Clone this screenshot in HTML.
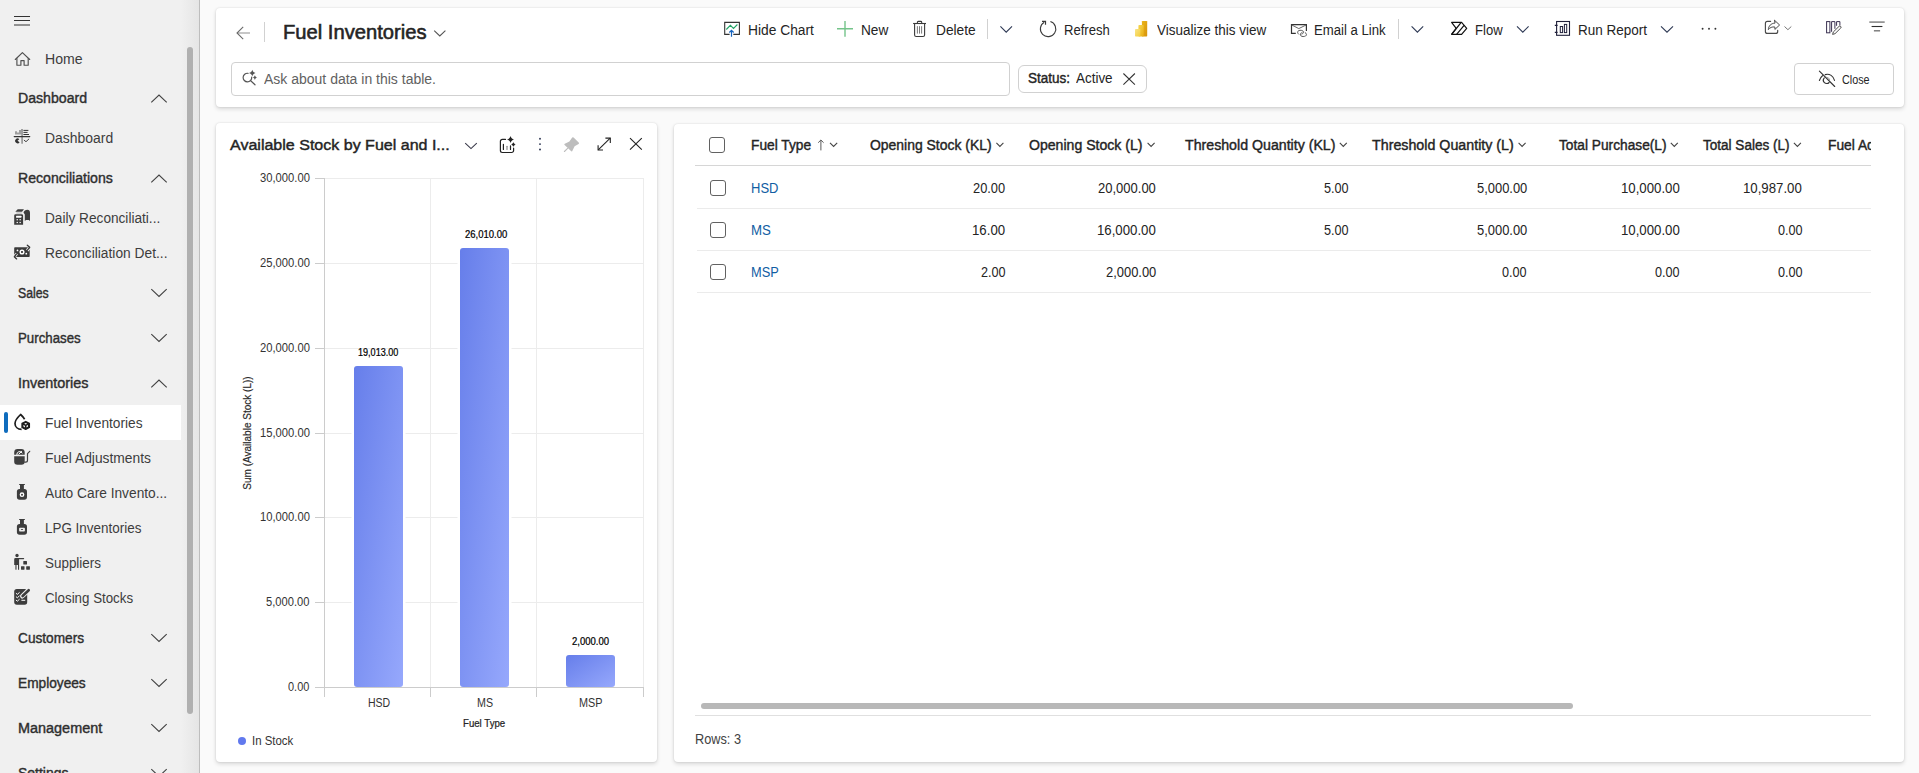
<!DOCTYPE html>
<html lang="en"><head><meta charset="utf-8"><title>Fuel Inventories</title>
<style>
html,body{margin:0;padding:0}
body{width:1919px;height:773px;overflow:hidden;position:relative;background:#fafafa;font-family:"Liberation Sans",sans-serif;}
.t{position:absolute;line-height:20px;white-space:pre;transform-origin:0 50%;}
.abs,svg.i{position:absolute}
svg.i{overflow:visible}
#sb{position:absolute;left:0;top:0;width:199px;height:773px;background:linear-gradient(90deg,#f0f0f0 0,#f0f0f0 181px,#e5e5e5 199px);border-right:1px solid #bdbdbd;}
#sel{position:absolute;left:0;top:405px;width:181px;height:35px;background:#fff}
#selbar{position:absolute;left:4px;top:412px;width:4px;height:21px;background:#0f6cbd;border-radius:2px}
#sbthumb{position:absolute;left:187px;top:47px;width:6px;height:667px;background:#b0b0b0;border-radius:3px}
.card{position:absolute;background:#fff;border-radius:4px;box-shadow:0 0 2px rgba(0,0,0,.12),0 2px 4px rgba(0,0,0,.14)}
.box{position:absolute;box-sizing:border-box;border:1px solid #d1d1d1;background:#fff}
.vl{position:absolute;width:1px;background:#d1d1d1}
.hl{position:absolute;height:1px}
.cb{position:absolute;box-sizing:border-box;width:16px;height:16px;border:1px solid #616161;border-radius:3px;background:#fff}
.bar{position:absolute;border-radius:3px;box-shadow:0 0 0 2.5px #fff;background:linear-gradient(to bottom right,#667eea 0%,#96a8fc 100%)}

</style></head>
<body>
<div id="sb"></div>
<div id="sel"></div><div id="selbar"></div><div id="sbthumb"></div>

<!-- cards -->
<div class="card" style="left:216px;top:8px;width:1688px;height:99px"></div>
<div class="card" style="left:216px;top:123px;width:441px;height:639px"></div>
<div class="card" style="left:674px;top:124px;width:1230px;height:638px"></div>

<!-- header boxes -->
<div class="vl" style="left:264px;top:22px;height:20px"></div>
<div class="box" style="left:231px;top:62px;width:779px;height:34px;border-radius:4px"></div>
<div class="box" style="left:1018px;top:65px;width:129px;height:28px;border-radius:6px"></div>
<div class="box" style="left:1794px;top:63px;width:100px;height:32px;border-radius:4px"></div>
<div class="vl" style="left:987px;top:19px;height:20px"></div>
<div class="vl" style="left:1398px;top:19px;height:20px"></div>

<!-- chart plot -->
<div id="plot">
<div class="hl" style="left:324px;top:178px;width:320px;background:#ececec"></div>
<div class="hl" style="left:324px;top:263px;width:320px;background:#ececec"></div>
<div class="hl" style="left:324px;top:348px;width:320px;background:#ececec"></div>
<div class="hl" style="left:324px;top:433px;width:320px;background:#ececec"></div>
<div class="hl" style="left:324px;top:517px;width:320px;background:#ececec"></div>
<div class="hl" style="left:324px;top:602px;width:320px;background:#ececec"></div>
<div class="vl" style="left:430px;top:178px;height:509px;background:#ececec"></div>
<div class="vl" style="left:536px;top:178px;height:509px;background:#ececec"></div>
<div class="vl" style="left:643px;top:178px;height:509px;background:#ececec"></div>
<!-- y ticks -->
<div class="hl" style="left:315px;top:178px;width:9px;background:#ccc"></div>
<div class="hl" style="left:315px;top:263px;width:9px;background:#ccc"></div>
<div class="hl" style="left:315px;top:348px;width:9px;background:#ccc"></div>
<div class="hl" style="left:315px;top:433px;width:9px;background:#ccc"></div>
<div class="hl" style="left:315px;top:517px;width:9px;background:#ccc"></div>
<div class="hl" style="left:315px;top:602px;width:9px;background:#ccc"></div>
<!-- bars -->
<div class="bar" style="left:354px;top:366px;width:49px;height:321px"></div>
<div class="bar" style="left:460px;top:248px;width:49px;height:439px"></div>
<div class="bar" style="left:566px;top:655px;width:49px;height:32px"></div>
<!-- axes -->
<div class="vl" style="left:324px;top:178px;height:519px;background:#ccc"></div>
<div class="hl" style="left:315px;top:687px;width:329px;background:#ccc"></div>
<div class="vl" style="left:430px;top:687px;height:10px;background:#ccc"></div>
<div class="vl" style="left:536px;top:687px;height:10px;background:#ccc"></div>
<div class="vl" style="left:643px;top:687px;height:10px;background:#ccc"></div>
<!-- legend -->
<div class="abs" style="left:238px;top:737px;width:8px;height:8px;border-radius:4px;background:#6179ee"></div>
</div>
<div class="abs" style="left:147.5px;top:422.6px;width:200px;height:20px;line-height:20px;text-align:center;font-size:10px;-webkit-text-stroke:.18px currentColor;color:#2a2a2a;transform:rotate(-90deg);transform-origin:50% 50%;white-space:pre;letter-spacing:0.01px">Sum (Available Stock (L))</div>

<!-- grid -->
<div class="cb" style="left:709px;top:137px"></div>
<div class="cb" style="left:710px;top:180px"></div>
<div class="cb" style="left:710px;top:222px"></div>
<div class="cb" style="left:710px;top:264px"></div>
<div class="hl" style="left:695px;top:165px;width:1176px;background:#d6d6d6"></div>
<div class="hl" style="left:697px;top:208px;width:1174px;background:#ebebeb"></div>
<div class="hl" style="left:697px;top:250px;width:1174px;background:#ebebeb"></div>
<div class="hl" style="left:697px;top:292px;width:1174px;background:#ebebeb"></div>
<div class="abs" style="left:701px;top:703px;width:872px;height:6px;border-radius:3px;background:#b8b8b8"></div>
<div class="hl" style="left:695px;top:715px;width:1176px;background:#e0e0e0"></div>
<!-- clipped "Fuel Ac" header -->
<div class="abs" style="left:1828.4px;top:134.95px;width:42.4px;height:20px;overflow:hidden"><div class="t" style="left:0;top:0;font-size:14px;-webkit-text-stroke:.39px currentColor;color:#242424;transform:scaleX(.985)">Fuel Adjustment</div></div>
<svg class="i" style="left:0;top:0" width="1919" height="773" viewBox="0 0 1919 773" fill="none" stroke-linecap="round" stroke-linejoin="round">
<!-- ===== sidebar ===== -->
<g stroke="#333" stroke-width="1.1" stroke-linecap="butt">
  <path d="M14 16.5H30M14 20.5H30M14 25H30"/>
</g>
<!-- home -->
<g stroke="#4f4f4f" stroke-width="1.15">
  <path d="M15.3 59.5L22.4 52.7L29.7 59.5"/>
  <path d="M16.9 58.6V65.2H20.9V60.6H24.1V65.2H28.2V58.6"/>
</g>
<!-- dashboard icon -->
<g>
  <path d="M15 134.6V131.2H17V132.4H19V130H21V129H23V143.8H21.2V134.6Z" fill="#9e9e9e" stroke="none"/>
  <path d="M23.8 130.4H28M23.8 132.4H27.2M23.8 134.5H28.6" stroke="#333" stroke-width="1"/>
  <path d="M14.2 136.6H29.8" stroke="#333" stroke-width="1.1"/>
  <path d="M19.3 139.2A2.4 2.4 0 1 0 19.6 142.2L17.5 140.8Z" fill="#333" stroke="none"/>
  <path d="M24.2 140.3L26 141.7L28.8 139.1" stroke="#444" stroke-width="1"/>
</g>
<!-- daily reconciliation: calculator + paper + bookmark -->
<g fill="#3d3d3d" stroke="none">
  <path d="M15.3 211.7L17.7 209.2H24L22 211.7Z"/>
  <rect x="16.3" y="212.2" width="5.4" height="1.6" fill="#c9c9c9"/>
  <path d="M14.2 215.6a1.4 1.4 0 0 1 1.4-1.4h6.1a1.4 1.4 0 0 1 1.4 1.4V224.8H14.2Z"/>
  <rect x="16" y="215.8" width="5.4" height="1.9" rx=".4" fill="#fff"/>
  <rect x="16.6" y="219.1" width="1.3" height="1.2" fill="#fff"/><rect x="19.4" y="219.1" width="1.6" height="1.2" fill="#d8d8d8"/>
  <rect x="16.6" y="221.9" width="1.3" height="1.2" fill="#fff"/><rect x="19.4" y="221.9" width="1.6" height="1.2" fill="#d8d8d8"/>
  <path d="M24.8 221V214.6L23.5 212.5C23.8 210.8 25.6 209.7 27.4 209.7C29 209.7 30 211 30 212.7V221l-1.2-.9h-2.8Z"/>
</g>
<!-- reconciliation details: banknote with arrows -->
<g stroke="none">
  <rect x="14.2" y="247.2" width="15.5" height="9.8" rx=".8" fill="#3a3a3a"/>
  <circle cx="22" cy="252" r="2.55" fill="#fff"/><circle cx="22" cy="252" r="1.05" fill="#2a2a2a"/>
  <circle cx="17.5" cy="250.4" r=".9" fill="#fff"/><circle cx="26.3" cy="253.7" r=".9" fill="#fff"/>
  <path d="M29.2 248L27.2 250.5" stroke="#f4f4f4" stroke-width="2.9" fill="none" stroke-linecap="butt"/>
  <path d="M14.8 256.1L16.8 253.6" stroke="#f4f4f4" stroke-width="2.9" fill="none" stroke-linecap="butt"/>
  <path d="M27.3 245.2L29.7 247.3L27.4 250.2" stroke="#333" stroke-width="1.3" fill="none"/>
  <path d="M16.6 258.9L14.3 256.8L16.4 254" stroke="#333" stroke-width="1.3" fill="none"/>
</g>
<!-- fuel inventories: drop + cube -->
<g stroke="#1c1c1c" stroke-width="1.7" stroke-linecap="butt">
  <path d="M24.6 419.2C23.4 417.2 21.8 415.6 20.6 414.5C18.2 416.8 15 420 15 423.4C15 426.9 17.8 429.3 21.6 429.4"/>
  <path d="M25.7 421.6L29.3 423.5V427.4L25.7 429.3L22.1 427.4V423.5Z" stroke-width="1.5" fill="#1c1c1c"/>
</g>
<path d="M25.7 423L27.2 423.8L25.7 424.6L24.2 423.8Z M23.4 425L24.9 425.8V427.4L23.4 426.6Z M28 425L26.5 425.8V427.4L28 426.6Z" fill="#fff"/>
<!-- fuel adjustments: pump -->
<g stroke="none" fill="#3f3f3f">
  <path d="M14.2 454.8V452.4a3.4 3.4 0 0 1 3.4-3.4h3.7a3.4 3.4 0 0 1 3.4 3.4V454.8Z"/>
  <path d="M14.2 456.2H24.7V461.4a3.3 3.3 0 0 1-3.3 3.3H17.5a3.3 3.3 0 0 1-3.3-3.3Z"/>
  <path d="M16.8 454.6a2.9 2.9 0 0 1 5.4-1.6" stroke="#fff" stroke-width="1" fill="none"/>
  <path d="M18.8 454.2L21.6 451.4" stroke="#fff" stroke-width="1" fill="none"/>
  <path d="M24.7 462.1h.9a1.9 1.9 0 0 0 1.9-1.9V453.6L29.7 451.3" stroke="#3f3f3f" stroke-width="1.2" fill="none"/>
</g>
<!-- auto care: bottle -->
<g stroke="none" fill="#3d3d3d">
  <rect x="19.1" y="484" width="5.8" height="1.1" rx=".3"/>
  <rect x="20" y="484.5" width="3.9" height="5"/>
  <rect x="16.9" y="489" width="10.1" height="10.7" rx="2.6"/>
  <circle cx="22" cy="494.7" r="2.35" fill="#fff"/><circle cx="22" cy="494.7" r="1" fill="#3d3d3d"/>
</g>
<!-- LPG: bottle -->
<g stroke="none" fill="#3d3d3d">
  <rect x="19.1" y="519" width="5.8" height="1.1" rx=".3"/>
  <rect x="20" y="519.5" width="3.9" height="5"/>
  <rect x="16.9" y="524" width="10.1" height="10.7" rx="2.6"/>
  <rect x="19.1" y="527.7" width="5.8" height="3.7" rx=".9" fill="#eee"/><ellipse cx="22" cy="529.5" rx="1.2" ry=".5" fill="#3d3d3d"/>
</g>
<!-- suppliers -->
<g stroke="none" fill="#3d3d3d">
  <circle cx="17" cy="555.5" r="1.65"/>
  <path d="M14.2 559.2a1.2 1.2 0 0 1 1.2-1.2H23.6a.6.6 0 0 1 0 1.2H19.1V569.7H18V565H14.2Z"/>
  <rect x="15.2" y="565" width="1.5" height="4.7" fill="#6a6a6a"/>
  <rect x="23.3" y="561" width="3.7" height="3.5" rx=".5"/>
  <rect x="21" y="566.2" width="3.5" height="3.5" rx=".4"/>
  <rect x="26.2" y="566.2" width="3.7" height="3.5" rx=".4"/>
</g>
<!-- closing stocks -->
<g stroke="none">
  <rect x="14.2" y="589" width="13" height="15.7" rx="2.6" fill="#3d3d3d"/>
  <g stroke="#fff" stroke-width="1" fill="none">
    <path d="M16.2 593.4L17.3 594.4L19.3 592.6"/>
    <path d="M16.2 596.8L17.3 597.8L19.3 596"/>
    <path d="M16.2 600.2L17.3 601.2L19.3 599.4"/>
    <path d="M21.8 600.3H24.8"/>
  </g>
  <path d="M22.3 596.2L28.8 590" stroke="#f0f0f0" stroke-width="4.6" fill="none"/>
  <path d="M22.6 596L28.7 590.2" stroke="#3d3d3d" stroke-width="2.6" fill="none"/>
</g>
<!-- sidebar chevrons -->
<g stroke="#424242" stroke-width="1.1" stroke-linecap="butt" stroke-linejoin="miter">
  <path d="M151.3 102.4L159 95L166.7 102.4"/>
  <path d="M151.3 182.4L159 175L166.7 182.4"/>
  <path d="M151.3 289.1L159 296.5L166.7 289.1"/>
  <path d="M151.3 334.1L159 341.5L166.7 334.1"/>
  <path d="M151.3 387.4L159 380L166.7 387.4"/>
  <path d="M151.3 634.1L159 641.5L166.7 634.1"/>
  <path d="M151.3 679.1L159 686.5L166.7 679.1"/>
  <path d="M151.3 724.1L159 731.5L166.7 724.1"/>
  <path d="M151.3 769.1L159 776.5L166.7 769.1"/>
</g>

<!-- ===== header ===== -->
<g stroke="#6a6a6a" stroke-width="1.1" stroke-linecap="butt" stroke-linejoin="miter">
  <path d="M237 33H250" stroke="#9a9a9a"/><path d="M243.2 26.9L237 33L243.2 39.1"/>
  <path d="M434.2 30.6L439.8 36L445.4 30.6" stroke="#555"/>
</g>
<!-- hide chart -->
<g stroke-width="1.1" stroke-linecap="butt" stroke-linejoin="miter">
  <path d="M729.6 34.4H724.7V22.4H739.4V34.4H733.3" stroke="#333"/>
  <path d="M726.3 29.5L730.4 25.3L733.5 28.4L737.4 24.5" stroke="#21a366"/>
  <path d="M731.5 36.7V30.4M729.3 32.5L731.5 30.3L733.7 32.5" stroke="#1664c0" stroke-width="1.2"/>
</g>
<!-- plus -->
<path d="M837 28.8H853M845 21V36.7" stroke="#74c48a" stroke-width="1.4" stroke-linecap="butt"/>
<!-- trash -->
<g stroke="#3a3a3a" stroke-width="1.1" stroke-linecap="butt">
  <path d="M913.1 23.5H926"/>
  <path d="M917.4 23.4V22.3a.9.9 0 0 1 .9-.9h2.5a.9.9 0 0 1 .9.9V23.4"/>
  <path d="M914.6 23.5V34.9a1.6 1.6 0 0 0 1.6 1.6h6.8a1.6 1.6 0 0 0 1.6-1.6V23.5"/>
  <path d="M917.4 26.2V33.6M919.5 26.2V33.6M921.6 26.2V33.6" stroke="#6b6b6b" stroke-width=".9"/>
</g>
<!-- header dividers' chevrons -->
<g stroke="#2f3a55" stroke-width="1.1" stroke-linecap="butt" stroke-linejoin="miter">
  <path d="M1000.4 26.3L1006.2 32.2L1012 26.3"/>
  <path d="M1411.6 26.3L1417.4 32.2L1423.2 26.3"/>
  <path d="M1517 26.3L1522.8 32.2L1528.6 26.3"/>
  <path d="M1661 26.3L1667 32.2L1673 26.3"/>
</g>
<!-- refresh -->
<g stroke="#3a3a3a" stroke-width="1.1" stroke-linecap="butt" stroke-linejoin="miter">
  <path d="M1050.4 21.6A7.7 7.7 0 1 1 1044.2 22.3"/>
  <path d="M1042 21.4H1045.5V24.8" stroke-width="1.2"/>
</g>
<!-- power bi -->
<defs>
  <linearGradient id="pb1" x1="0" y1="0" x2="1" y2="1"><stop offset="0" stop-color="#ebb51a"/><stop offset="1" stop-color="#d6930b"/></linearGradient>
  <linearGradient id="pb2" x1="0" y1="0" x2="1" y2="1"><stop offset="0" stop-color="#f6d751"/><stop offset="1" stop-color="#e9ad12"/></linearGradient>
  <linearGradient id="pb3" x1="0" y1="0" x2="1" y2="1"><stop offset="0" stop-color="#f9e589"/><stop offset="1" stop-color="#f4cd3c"/></linearGradient>
</defs>
<rect x="1141.9" y="20.9" width="5.3" height="15.6" rx=".7" fill="url(#pb1)"/>
<rect x="1138.4" y="25.1" width="5.3" height="11.4" rx=".7" fill="url(#pb2)"/>
<rect x="1135" y="28.9" width="5.3" height="7.6" rx=".7" fill="url(#pb3)"/>
<!-- email a link -->
<g stroke="#333" stroke-width="1.1" stroke-linecap="butt" stroke-linejoin="miter">
  <path d="M1295.8 33.4H1291.5V24.6H1306.4V31.1" stroke-width="1.2"/>
  <path d="M1291.6 24.9L1298.8 28.6L1306.3 24.9" stroke="#555" stroke-width=".9"/>
  <g stroke="#5a5a5a" stroke-width="1" stroke-linecap="round">
    <path d="M1298.6 34.2C1297.2 33 1297.2 31.3 1298.8 30.6C1300.3 30 1302.2 30.2 1303.2 31.2C1304 32.2 1303 33.6 1302 34.2"/>
    <path d="M1305.2 32.6C1306.8 33.4 1306.9 35.2 1305.6 36C1304.2 36.7 1302 36.8 1300.9 35.8C1299.8 34.6 1300.6 33 1302 32.4"/>
  </g>
</g>
<!-- flow -->
<g stroke="#111" stroke-width="1.2" stroke-linejoin="round">
  <path d="M1451.6 22.4H1461.6L1466.7 28.3L1461.6 34.3H1451.6L1456.2 28.3Z"/>
  <path d="M1461 22.7L1451.9 34M1463.9 25.6L1456.6 34.3"/>
</g>
<!-- run report -->
<g stroke="#20203a" stroke-width="1.1" stroke-linecap="butt" stroke-linejoin="miter">
  <rect x="1556.6" y="21.5" width="12.9" height="13.8"/>
  <path d="M1554.8 25.4H1557.6M1554.8 32.4H1557.6"/>
  <rect x="1560.3" y="26.5" width="2.3" height="6.1" stroke-width="1"/>
  <rect x="1564.4" y="24.4" width="2.3" height="8.2" stroke-width="1"/>
</g>
<!-- more ... -->
<g fill="#333" stroke="none"><circle cx="1702.6" cy="28.8" r=".95"/><circle cx="1709" cy="28.8" r=".95"/><circle cx="1715.4" cy="28.8" r=".95"/></g>
<!-- share -->
<g stroke="#4a4a4a" stroke-width="1.15" stroke-linecap="round" stroke-linejoin="round">
  <path d="M1770.6 21.4H1767.4a2 2 0 0 0-2 2V31.4a2 2 0 0 0 2 2H1775.7a2 2 0 0 0 2-2V30.3"/>
  <path d="M1774.7 20.4L1779.6 25L1774.9 29.4V27C1772 26.6 1770 27.6 1768.3 29.6C1768.6 26 1770.8 23.4 1774.7 23.1Z" stroke-width="1"/>
  <path d="M1784.5 26.5L1787.9 29.7L1791.3 26.5" stroke="#777" stroke-width="1" stroke-linecap="butt"/>
</g>
<!-- edit columns -->
<g stroke="#3a3050" stroke-width="1" stroke-linecap="butt" stroke-linejoin="miter">
  <rect x="1826.6" y="21.6" width="3.3" height="11.2"/>
  <path d="M1834.9 28.8V21.6H1831.6V31.8"/>
  <path d="M1836.6 25.8V21.6H1839.9V25.4"/>
  <path d="M1832.6 34.4L1833.3 32L1839 26.4a1.1 1.1 0 0 1 1.7 1.7L1835 33.7Z" stroke="#3a3a3a" stroke-width=".9" fill="#fff"/>
</g>
<!-- filter -->
<g stroke-linecap="butt">
  <path d="M1869.3 22.1H1884.7" stroke="#8a8a8a" stroke-width="1.6"/>
  <path d="M1871.6 26.5H1882.4" stroke="#2f2f2f" stroke-width="1.1"/>
  <path d="M1873.9 30.8H1880.1" stroke="#777" stroke-width="1.4"/>
</g>
<!-- search sparkle -->
<g stroke="#555" stroke-width="1.2" stroke-linecap="round">
  <path d="M248 73.3A4.3 4.3 0 1 0 251.7 77.2"/>
  <path d="M250.7 80.8L255 84.8"/>
</g>
<g fill="#555" stroke="none">
  <path d="M252.3 69.8C252.85 71.62 253.78 72.55 255.60000000000002 73.1C253.78 73.65 252.85 74.58 252.3 76.39999999999999C251.75 74.58 250.82 73.65 249.0 73.1C250.82 72.55 251.75 71.62 252.3 69.8Z"/>
  <path d="M254.9 75.3C255.29 76.57 255.93 77.21 257.2 77.6C255.93 77.99 255.29 78.63 254.9 79.89999999999999C254.51 78.63 253.87 77.99 252.6 77.6C253.87 77.21 254.51 76.57 254.9 75.3Z"/>
</g>
<!-- chip x -->
<path d="M1123.4 73.5L1134.9 84.7M1134.9 73.5L1123.4 84.7" stroke="#333" stroke-width="1.05" stroke-linecap="butt"/>
<!-- eye off -->
<g stroke="#333" stroke-width="1.1" stroke-linecap="round">
  <path d="M1819.4 71.2L1834.7 86.5"/>
  <path d="M1825.2 74.6C1829.6 73.4 1833.4 76 1834.5 80.4"/>
  <path d="M1822.5 75.7C1820.8 77 1819.9 78.6 1819.4 80.5"/>
  <path d="M1824.3 77.9A3.3 3.3 0 0 0 1829.1 82.5" />
  <path d="M1826.8 77.2A3.3 3.3 0 0 1 1829.7 79.6" stroke="#888" stroke-width=".8"/>
</g>

<!-- ===== chart header icons ===== -->
<g stroke="#3a3a4a" stroke-width="1.1" stroke-linecap="butt" stroke-linejoin="miter">
  <path d="M465.2 143.1L471 148.6L476.8 143.1"/>
</g>
<g stroke="#222" stroke-width="1.2" stroke-linecap="round" stroke-linejoin="round">
  <path d="M505.5 139.4H502.3a1.9 1.9 0 0 0-1.9 1.9V150.6a1.9 1.9 0 0 0 1.9 1.9H511.7a1.9 1.9 0 0 0 1.9-1.9V148.2"/>
  <path d="M503.4 144.3V149.5M510.5 145.8V149.5"/>
  <path d="M507 146.3V149.5" stroke="#888"/>
</g>
<g fill="#222" stroke="none">
  <path d="M510.5 135.9C511.09 137.83 512.07 138.81 514.0 139.4C512.07 139.99 511.09 140.97 510.5 142.9C509.91 140.97 508.93 139.99 507.0 139.4C508.93 138.81 509.91 137.83 510.5 135.9Z"/>
  <path d="M513.4 141.9C513.82 143.28 514.52 143.98 515.9 144.4C514.52 144.82 513.82 145.52 513.4 146.9C512.98 145.52 512.28 144.82 510.9 144.4C512.28 143.98 512.98 143.28 513.4 141.9Z"/>
</g>
<g fill="#2a3350" stroke="none"><circle cx="540" cy="138.8" r=".95"/><circle cx="540" cy="144.1" r=".95"/><circle cx="540" cy="149.5" r=".95"/></g>
<!-- pin -->
<g fill="#bdbdbd" stroke="none">
  <path d="M572.2 137.5a1 1 0 0 1 1.4 0L578.7 142.4a1 1 0 0 1-.1 1.5L574.6 146.2L572.3 150.9a.8.8 0 0 1-1.3.2L564.6 145a.8.8 0 0 1 .2-1.3L569.4 141.6Z"/>
  <path d="M567.6 148.3L564.4 151.5" stroke="#bdbdbd" stroke-width="1.1"/>
</g>
<!-- expand -->
<g stroke="#222" stroke-width="1.1" stroke-linecap="butt" stroke-linejoin="miter">
  <path d="M598.2 149.8L610.2 138.2"/>
  <path d="M605.4 138.1H610.3V142.9"/>
  <path d="M598.1 145.2V150H603"/>
</g>
<!-- close chart -->
<path d="M630 138.2L641.8 149.7M641.8 138.2L630 149.7" stroke="#222" stroke-width="1.1" stroke-linecap="butt"/>

<!-- ===== grid header icons ===== -->
<g stroke="#444" stroke-width="1.1" stroke-linecap="butt" stroke-linejoin="miter">
  <path d="M820.9 150.4V140.1M818.2 142.7L820.9 140L823.6 142.7" stroke="#5a5a5a" stroke-width="1"/>
  <path d="M830 142.8L833.6 146.4L837.2 142.8"/>
  <path d="M996.4 142.8L999.9 146.4L1003.4 142.8"/>
  <path d="M1147.6 142.8L1151.1 146.4L1154.6 142.8"/>
  <path d="M1339.8 142.8L1343.3 146.4L1346.8 142.8"/>
  <path d="M1518.6 142.8L1522.1 146.4L1525.6 142.8"/>
  <path d="M1670.8 142.8L1674.3 146.4L1677.8 142.8"/>
  <path d="M1793.9 142.8L1797.4 146.4L1800.9 142.8"/>
</g>
</svg>


<!-- text layer -->
<div class="t" style="left:44.89px;top:49.00px;font-size:14px;color:#3d3d3d;transform:scaleX(1.0066);">Home</div>
<div class="t" style="left:17.94px;top:88.00px;font-size:14px;color:#2e2e2e;transform:scaleX(1.0090);-webkit-text-stroke:0.39px currentColor;">Dashboard</div>
<div class="t" style="left:44.90px;top:128.00px;font-size:14px;color:#3d3d3d;transform:scaleX(0.9955);">Dashboard</div>
<div class="t" style="left:17.94px;top:168.00px;font-size:14px;color:#2e2e2e;transform:scaleX(1.0069);-webkit-text-stroke:0.39px currentColor;">Reconciliations</div>
<div class="t" style="left:44.93px;top:208.00px;font-size:14px;color:#3d3d3d;transform:scaleX(0.9745);">Daily Reconciliati...</div>
<div class="t" style="left:44.92px;top:243.00px;font-size:14px;color:#3d3d3d;transform:scaleX(0.9836);">Reconciliation Det...</div>
<div class="t" style="left:17.72px;top:283.00px;font-size:14px;color:#2e2e2e;transform:scaleX(0.8782);-webkit-text-stroke:0.39px currentColor;">Sales</div>
<div class="t" style="left:17.99px;top:328.00px;font-size:14px;color:#2e2e2e;transform:scaleX(0.9476);-webkit-text-stroke:0.39px currentColor;">Purchases</div>
<div class="t" style="left:17.92px;top:373.00px;font-size:14px;color:#2e2e2e;transform:scaleX(1.0284);-webkit-text-stroke:0.39px currentColor;">Inventories</div>
<div class="t" style="left:44.92px;top:413.00px;font-size:14px;color:#3d3d3d;transform:scaleX(0.9797);">Fuel Inventories</div>
<div class="t" style="left:44.91px;top:448.00px;font-size:14px;color:#3d3d3d;transform:scaleX(0.9864);">Fuel Adjustments</div>
<div class="t" style="left:44.70px;top:483.00px;font-size:14px;color:#3d3d3d;transform:scaleX(0.9812);">Auto Care Invento...</div>
<div class="t" style="left:44.94px;top:518.00px;font-size:14px;color:#3d3d3d;transform:scaleX(0.9599);">LPG Inventories</div>
<div class="t" style="left:44.70px;top:553.00px;font-size:14px;color:#3d3d3d;transform:scaleX(0.9595);">Suppliers</div>
<div class="t" style="left:44.70px;top:588.00px;font-size:14px;color:#3d3d3d;transform:scaleX(0.9515);">Closing Stocks</div>
<div class="t" style="left:17.74px;top:628.00px;font-size:14px;color:#2e2e2e;transform:scaleX(0.9769);-webkit-text-stroke:0.39px currentColor;">Customers</div>
<div class="t" style="left:17.96px;top:673.00px;font-size:14px;color:#2e2e2e;transform:scaleX(0.9775);-webkit-text-stroke:0.39px currentColor;">Employees</div>
<div class="t" style="left:17.92px;top:718.00px;font-size:14px;color:#2e2e2e;transform:scaleX(1.0305);-webkit-text-stroke:0.39px currentColor;">Management</div>
<div class="t" style="left:17.75px;top:763.00px;font-size:14px;color:#2e2e2e;transform:scaleX(0.9965);-webkit-text-stroke:0.39px currentColor;">Settings</div>
<div class="t" style="left:282.87px;top:22.00px;font-size:20px;color:#242424;transform:scaleX(1.0088);-webkit-text-stroke:0.56px currentColor;">Fuel Inventories</div>
<div class="t" style="left:747.92px;top:20.00px;font-size:14px;color:#242424;transform:scaleX(0.9844);">Hide Chart</div>
<div class="t" style="left:860.72px;top:20.00px;font-size:14px;color:#242424;transform:scaleX(0.9750);">New</div>
<div class="t" style="left:935.72px;top:20.00px;font-size:14px;color:#242424;transform:scaleX(0.9803);">Delete</div>
<div class="t" style="left:1064.17px;top:20.00px;font-size:14px;color:#242424;transform:scaleX(0.9336);">Refresh</div>
<div class="t" style="left:1157.20px;top:20.00px;font-size:14px;color:#242424;transform:scaleX(0.9629);">Visualize this view</div>
<div class="t" style="left:1314.16px;top:20.00px;font-size:14px;color:#242424;transform:scaleX(0.9390);">Email a Link</div>
<div class="t" style="left:1474.97px;top:20.00px;font-size:14px;color:#242424;transform:scaleX(0.9338);">Flow</div>
<div class="t" style="left:1578.44px;top:20.00px;font-size:14px;color:#242424;transform:scaleX(0.9646);">Run Report</div>
<div class="t" style="left:264.10px;top:69.00px;font-size:14px;color:#616161;transform:scaleX(0.9999);">Ask about data in this table.</div>
<div class="t" style="left:1027.59px;top:68.00px;font-size:14px;color:#242424;transform:scaleX(0.9656);-webkit-text-stroke:0.39px currentColor;">Status:</div>
<div class="t" style="left:1075.80px;top:68.00px;font-size:14px;color:#242424;transform:scaleX(0.9599);">Active</div>
<div class="t" style="left:1842.30px;top:70.00px;font-size:12px;color:#242424;transform:scaleX(0.8998);">Close</div>
<div class="t" style="left:230.12px;top:135.00px;font-size:15.5px;color:#242424;transform:scaleX(1.0338);-webkit-text-stroke:0.43px currentColor;">Available Stock by Fuel and I...</div>
<div class="t" style="left:259.70px;top:168.00px;font-size:12px;color:#333333;transform:scaleX(0.9346);">30,000.00</div>
<div class="t" style="left:259.70px;top:253.00px;font-size:12px;color:#333333;transform:scaleX(0.9346);">25,000.00</div>
<div class="t" style="left:259.70px;top:338.00px;font-size:12px;color:#333333;transform:scaleX(0.9346);">20,000.00</div>
<div class="t" style="left:259.70px;top:423.00px;font-size:12px;color:#333333;transform:scaleX(0.9346);">15,000.00</div>
<div class="t" style="left:259.70px;top:507.00px;font-size:12px;color:#333333;transform:scaleX(0.9346);">10,000.00</div>
<div class="t" style="left:266.20px;top:592.00px;font-size:12px;color:#333333;transform:scaleX(0.9291);">5,000.00</div>
<div class="t" style="left:288.30px;top:677.00px;font-size:12px;color:#333333;transform:scaleX(0.9121);">0.00</div>
<div class="t" style="left:464.60px;top:225.00px;font-size:10px;color:#000;transform:scaleX(0.9480);-webkit-text-stroke:0.22px currentColor;">26,010.00</div>
<div class="t" style="left:358.45px;top:343.00px;font-size:10px;color:#000;transform:scaleX(0.9060);-webkit-text-stroke:0.22px currentColor;">19,013.00</div>
<div class="t" style="left:571.85px;top:632.00px;font-size:10px;color:#000;transform:scaleX(0.9524);-webkit-text-stroke:0.22px currentColor;">2,000.00</div>
<div class="t" style="left:367.55px;top:693.00px;font-size:12px;color:#333333;transform:scaleX(0.8765);">HSD</div>
<div class="t" style="left:477.10px;top:693.00px;font-size:12px;color:#333333;transform:scaleX(0.8891);">MS</div>
<div class="t" style="left:579.15px;top:693.00px;font-size:12px;color:#333333;transform:scaleX(0.9038);">MSP</div>
<div class="t" style="left:463.21px;top:714.00px;font-size:10px;color:#242424;transform:scaleX(0.9648);-webkit-text-stroke:0.22px currentColor;">Fuel Type</div>
<div class="t" style="left:251.55px;top:731.00px;font-size:12px;color:#333333;transform:scaleX(0.9526);">In Stock</div>
<div class="t" style="left:751.01px;top:135.00px;font-size:14px;color:#242424;transform:scaleX(0.9807);-webkit-text-stroke:0.39px currentColor;">Fuel Type</div>
<div class="t" style="left:869.60px;top:135.00px;font-size:14px;color:#242424;transform:scaleX(0.9951);-webkit-text-stroke:0.39px currentColor;">Opening Stock (KL)</div>
<div class="t" style="left:1028.80px;top:135.00px;font-size:14px;color:#242424;transform:scaleX(1.0057);-webkit-text-stroke:0.39px currentColor;">Opening Stock (L)</div>
<div class="t" style="left:1184.90px;top:135.00px;font-size:14px;color:#242424;transform:scaleX(1.0125);-webkit-text-stroke:0.39px currentColor;">Threshold Quantity (KL)</div>
<div class="t" style="left:1372.40px;top:135.00px;font-size:14px;color:#242424;transform:scaleX(1.0179);-webkit-text-stroke:0.39px currentColor;">Threshold Quantity (L)</div>
<div class="t" style="left:1558.79px;top:135.00px;font-size:14px;color:#242424;transform:scaleX(0.9804);-webkit-text-stroke:0.39px currentColor;">Total Purchase(L)</div>
<div class="t" style="left:1702.89px;top:135.00px;font-size:14px;color:#242424;transform:scaleX(0.9674);-webkit-text-stroke:0.39px currentColor;">Total Sales (L)</div>
<div class="t" style="left:750.77px;top:178.00px;font-size:14px;color:#115ea3;transform:scaleX(0.9280);">HSD</div>
<div class="t" style="left:973.15px;top:178.00px;font-size:14px;color:#242424;transform:scaleX(0.9178);">20.00</div>
<div class="t" style="left:1098.05px;top:178.00px;font-size:14px;color:#242424;transform:scaleX(0.9289);">20,000.00</div>
<div class="t" style="left:1323.60px;top:178.00px;font-size:14px;color:#242424;transform:scaleX(0.9031);">5.00</div>
<div class="t" style="left:1476.70px;top:178.00px;font-size:14px;color:#242424;transform:scaleX(0.9230);">5,000.00</div>
<div class="t" style="left:1620.51px;top:178.00px;font-size:14px;color:#242424;transform:scaleX(0.9440);">10,000.00</div>
<div class="t" style="left:1743.41px;top:178.00px;font-size:14px;color:#242424;transform:scaleX(0.9440);">10,987.00</div>
<div class="t" style="left:750.75px;top:220.00px;font-size:14px;color:#115ea3;transform:scaleX(0.9460);">MS</div>
<div class="t" style="left:972.21px;top:220.00px;font-size:14px;color:#242424;transform:scaleX(0.9446);">16.00</div>
<div class="t" style="left:1097.11px;top:220.00px;font-size:14px;color:#242424;transform:scaleX(0.9440);">16,000.00</div>
<div class="t" style="left:1323.60px;top:220.00px;font-size:14px;color:#242424;transform:scaleX(0.9031);">5.00</div>
<div class="t" style="left:1476.70px;top:220.00px;font-size:14px;color:#242424;transform:scaleX(0.9230);">5,000.00</div>
<div class="t" style="left:1620.51px;top:220.00px;font-size:14px;color:#242424;transform:scaleX(0.9440);">10,000.00</div>
<div class="t" style="left:1777.60px;top:220.00px;font-size:14px;color:#242424;transform:scaleX(0.9031);">0.00</div>
<div class="t" style="left:750.78px;top:262.00px;font-size:14px;color:#115ea3;transform:scaleX(0.9172);">MSP</div>
<div class="t" style="left:980.70px;top:262.00px;font-size:14px;color:#242424;transform:scaleX(0.9031);">2.00</div>
<div class="t" style="left:1105.60px;top:262.00px;font-size:14px;color:#242424;transform:scaleX(0.9230);">2,000.00</div>
<div class="t" style="left:1502.40px;top:262.00px;font-size:14px;color:#242424;transform:scaleX(0.9031);">0.00</div>
<div class="t" style="left:1654.70px;top:262.00px;font-size:14px;color:#242424;transform:scaleX(0.9031);">0.00</div>
<div class="t" style="left:1777.60px;top:262.00px;font-size:14px;color:#242424;transform:scaleX(0.9031);">0.00</div>
<div class="t" style="left:694.79px;top:729.00px;font-size:14px;color:#424242;transform:scaleX(0.9099);">Rows: 3</div>
</body></html>
